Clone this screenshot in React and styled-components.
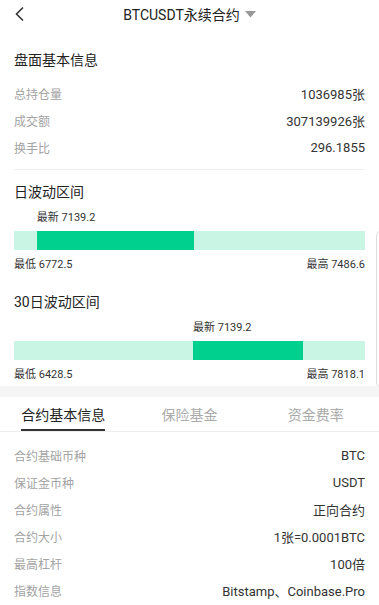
import styled, { createGlobalStyle } from 'styled-components';

const GlobalStyle = createGlobalStyle`
  html, body {
    margin: 0;
    padding: 0;
    background: #fff;
  }
  body {
    font-family: Roboto, "Noto Sans CJK SC", sans-serif;
    color: #333;
  }
`;

const Page = styled.div`
  position: relative;
  width: 379px;
  height: 605px;
  overflow: hidden;
  background: #fff;
`;

const Header = styled.div`
  height: 30px;
  display: flex;
  align-items: center;
  justify-content: center;
  position: relative;
`;

const BackButton = styled.div`
  position: absolute;
  left: 14px;
  top: 5px;
  width: 16px;
  height: 18px;
  display: flex;
  align-items: center;
`;

const Title = styled.div`
  font-size: 14px;
  color: #222;
  display: flex;
  align-items: center;
  gap: 5px;
  margin-top: -2px;
`;

const Section = styled.div`
  padding: 0 14px;
`;

const SectionTitle = styled.div`
  font-size: 14px;
  line-height: 20px;
  color: #222;
  margin-top: ${p => p.$top || 0}px;
`;

const Rows = styled.div`
  margin-top: ${p => p.$top || 0}px;
`;

const Row = styled.div`
  height: 27px;
  display: flex;
  align-items: center;
  justify-content: space-between;
  font-size: 12px;
`;

const Label = styled.span`
  color: #a3a3a3;
`;

const Value = styled.span`
  color: #333;
  font-size: 13px;
`;

const Divider = styled.div`
  height: 1px;
  background: #eeeeee;
  margin-top: 8px;
`;

const Range = styled.div`
  margin-top: ${p => p.$top}px;
`;

const Latest = styled.div`
  margin-top: 9px;
  height: 14px;
  line-height: 14px;
  font-size: 11px;
  color: #333;
  position: relative;
`;

const Bar = styled.div`
  margin-top: 6px;
  height: 19px;
  background: #c9f5e5;
  position: relative;
`;

const Fill = styled.div`
  position: absolute;
  top: 0;
  bottom: 0;
  background: #00d08d;
`;

const Ends = styled.div`
  margin-top: 8px;
  height: 14px;
  line-height: 14px;
  display: flex;
  justify-content: space-between;
  font-size: 11px;
  color: #333;
`;

const Gap = styled.div`
  height: 11px;
  background: #f5f5f5;
  margin-top: 4px;
`;

const Tabs = styled.div`
  display: flex;
  height: 34px;
  border-bottom: 1px solid #eeeeee;
`;

const Tab = styled.div`
  flex: 1;
  display: flex;
  justify-content: center;
  align-items: stretch;
`;

const TabLabel = styled.div`
  font-size: 14px;
  color: ${p => (p.$active ? '#222' : '#aaa')};
  display: flex;
  align-items: center;
  padding-top: 2px;
  border-bottom: 2px solid ${p => (p.$active ? '#333' : 'transparent')};
`;

const SideTab = styled.div`
  position: absolute;
  left: 376px;
  top: 230px;
  width: 20px;
  height: 156px;
  border: 1px solid #dddddd;
  border-radius: 6px;
  background: #fff;
`;

function RangeBlock({ title, top, latest, low, high, start, width }) {
  return (
    <Range $top={top}>
      <SectionTitle>{title}</SectionTitle>
      <Latest>
        <span style={{ position: 'absolute', left: `${start}%` }}>最新 {latest}</span>
      </Latest>
      <Bar>
        <Fill style={{ left: `${start}%`, width: `${width}%` }} />
      </Bar>
      <Ends>
        <span>最低 {low}</span>
        <span>最高 {high}</span>
      </Ends>
    </Range>
  );
}

const marketRows = [
  ['总持仓量', '1036985张'],
  ['成交额', '307139926张'],
  ['换手比', '296.1855'],
];

const contractRows = [
  ['合约基础币种', 'BTC'],
  ['保证金币种', 'USDT'],
  ['合约属性', '正向合约'],
  ['合约大小', '1张=0.0001BTC'],
  ['最高杠杆', '100倍'],
  ['指数信息', 'Bitstamp、Coinbase.Pro'],
];

const tabs = ['合约基本信息', '保险基金', '资金费率'];

export default function App() {
  return (
    <Page>
      <GlobalStyle />
      <Header>
        <BackButton>
          <svg width="12" height="16" viewBox="0 0 12 16">
            <polyline points="9,1.5 2.5,8 9,14.5" fill="none" stroke="#333" strokeWidth="1.6" />
          </svg>
        </BackButton>
        <Title>
          BTCUSDT永续合约
          <svg width="11" height="7" viewBox="0 0 11 7">
            <polygon points="0,0 11,0 5.5,6.5" fill="#999" />
          </svg>
        </Title>
      </Header>

      <Section>
        <SectionTitle $top={20}>盘面基本信息</SectionTitle>
        <Rows $top={10}>
          {marketRows.map(([k, v]) => (
            <Row key={k}>
              <Label>{k}</Label>
              <Value>{v}</Value>
            </Row>
          ))}
        </Rows>
        <Divider />
        <RangeBlock title="日波动区间" top={12} latest="7139.2" low="6772.5" high="7486.6" start={6.5} width={44.7} />
        <RangeBlock title="30日波动区间" top={20} latest="7139.2" low="6428.5" high="7818.1" start={51} width={31.3} />
      </Section>

      <Gap />

      <Tabs>
        {tabs.map((t, i) => (
          <Tab key={t}>
            <TabLabel $active={i === 0}>{t}</TabLabel>
          </Tab>
        ))}
      </Tabs>

      <Section>
        <Rows $top={10}>
          {contractRows.map(([k, v]) => (
            <Row key={k}>
              <Label>{k}</Label>
              <Value>{v}</Value>
            </Row>
          ))}
        </Rows>
      </Section>

      <SideTab />
    </Page>
  );
}
